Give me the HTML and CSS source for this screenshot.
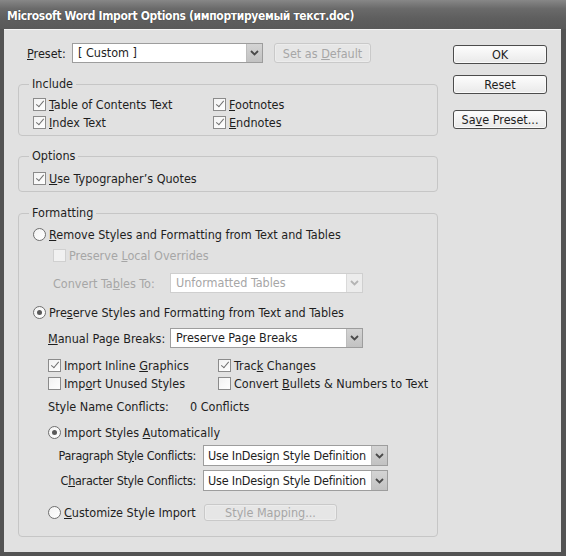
FILE: index.html
```html
<!DOCTYPE html>
<html lang="en">
<head>
    <meta charset="UTF-8">
    <title>Microsoft Word Import Options</title>
    <link rel="stylesheet" href="styles.css">
</head>
<body>

    <div class="window">
        <div class="titlebar">Microsoft Word Import Options (импортируемый текст.doc)</div>

        <div class="client">
            <div class="main">

                <!-- Preset picker -->
                <div class="preset-row">
                    <span class="preset-label"><u>P</u>reset:</span>
                    <div class="select preset-select">
                        <span class="select-value">[ Custom ]</span>
                        <span class="select-arrow"><svg width="9" height="6" viewBox="0 0 9 6"><polyline points="1,1 4.5,4.5 8,1" fill="none" stroke="#4a4a4a" stroke-width="1.8"/></svg></span>
                    </div>
                    <button class="btn btn-default" disabled>Set as <u>D</u>efault</button>
                </div>

                <!-- Include -->
                <fieldset class="group group-include">
                    <legend>Include</legend>
                    <div class="group-body">
                        <div class="cols cols-include">
                            <span class="opt"><span class="box checked"></span><span><u>T</u>able of Contents Text</span></span>
                            <span class="opt"><span class="box checked"></span><span><u>F</u>ootnotes</span></span>
                            <span class="opt"><span class="box checked"></span><span><u>I</u>ndex Text</span></span>
                            <span class="opt"><span class="box checked"></span><span><u>E</u>ndnotes</span></span>
                        </div>
                    </div>
                </fieldset>

                <!-- Options -->
                <fieldset class="group group-options">
                    <legend>Options</legend>
                    <div class="group-body">
                        <span class="opt"><span class="box checked"></span><span><u>U</u>se Typographer’s Quotes</span></span>
                    </div>
                </fieldset>

                <!-- Formatting -->
                <fieldset class="group group-formatting">
                    <legend>Formatting</legend>
                    <div class="group-body">
                        <div class="row"><span class="opt"><span class="radio"></span><span><u>R</u>emove Styles and Formatting from Text and Tables</span></span></div>

                        <div class="row row-local"><span class="opt off"><span class="box"></span><span>Preserve <u>L</u>ocal Overrides</span></span></div>

                        <div class="row row-field row-convert">
                            <span class="field-label off">Convert Ta<u>b</u>les To:</span>
                            <div class="select select-wide off">
                                <span class="select-value">Unformatted Tables</span>
                                <span class="select-arrow"><svg width="9" height="6" viewBox="0 0 9 6"><polyline points="1,1 4.5,4.5 8,1" fill="none" stroke="#b4b4b4" stroke-width="1.8"/></svg></span>
                            </div>
                        </div>

                        <div class="row row-preserve"><span class="opt"><span class="radio selected"></span><span>Pre<u>s</u>erve Styles and Formatting from Text and Tables</span></span></div>

                        <div class="row row-field row-manual">
                            <span class="field-label"><u>M</u>anual Page Breaks:</span>
                            <div class="select select-wide">
                                <span class="select-value">Preserve Page Breaks</span>
                                <span class="select-arrow"><svg width="9" height="6" viewBox="0 0 9 6"><polyline points="1,1 4.5,4.5 8,1" fill="none" stroke="#4a4a4a" stroke-width="1.8"/></svg></span>
                            </div>
                        </div>

                        <div class="cols cols-format">
                            <span class="opt"><span class="box checked"></span><span>Import Inline <u>G</u>raphics</span></span>
                            <span class="opt"><span class="box checked"></span><span>Trac<u>k</u> Changes</span></span>
                            <span class="opt"><span class="box"></span><span>Imp<u>o</u>rt Unused Styles</span></span>
                            <span class="opt"><span class="box"></span><span>Convert <u>B</u>ullets &amp; Numbers to Text</span></span>
                        </div>

                        <div class="row row-sub row-conflicts">
                            <span class="conflicts-label">Style Name Conflicts:</span>
                            <span>0 Conflicts</span>
                        </div>

                        <div class="row row-sub row-auto"><span class="opt"><span class="radio selected"></span><span>Import Styles <u>A</u>utomatically</span></span></div>

                        <div class="row row-sub row-style">
                            <span class="style-label">Paragraph St<u>y</u>le Conflicts:</span>
                            <div class="select select-style">
                                <span class="select-value">Use InDesign Style Definition</span>
                                <span class="select-arrow"><svg width="9" height="6" viewBox="0 0 9 6"><polyline points="1,1 4.5,4.5 8,1" fill="none" stroke="#4a4a4a" stroke-width="1.8"/></svg></span>
                            </div>
                        </div>

                        <div class="row row-sub row-style">
                            <span class="style-label">C<u>h</u>aracter Style Conflicts:</span>
                            <div class="select select-style">
                                <span class="select-value">Use InDesign Style Definition</span>
                                <span class="select-arrow"><svg width="9" height="6" viewBox="0 0 9 6"><polyline points="1,1 4.5,4.5 8,1" fill="none" stroke="#4a4a4a" stroke-width="1.8"/></svg></span>
                            </div>
                        </div>

                        <div class="row row-sub row-custom">
                            <span class="opt opt-custom"><span class="radio"></span><span><u>C</u>ustomize Style Import</span></span>
                            <button class="btn btn-mapping" disabled>Style Mappin<u>g</u>...</button>
                        </div>
                    </div>
                </fieldset>
            </div>

            <!-- Dialog buttons -->
            <div class="side">
                <button class="btn btn-ok">OK</button>
                <button class="btn btn-reset">Reset</button>
                <button class="btn btn-save">Sa<u>v</u>e Preset...</button>
            </div>
        </div>
    </div>

</body>
</html>
```

FILE: styles.css
```css
/* Reset and base styles */
* {
    margin: 0;
    padding: 0;
    box-sizing: border-box;
}

body {
    width: 566px;
    height: 556px;
    font-family: 'DejaVu Sans Condensed', 'Liberation Sans', sans-serif;
    font-size: 12.5px;
    color: #1e1e1e;
    background: #4f4f4f;
}

u {
    text-decoration: underline;
    text-underline-offset: 1px;
}

/* Window frame */
.window {
    width: 566px;
    height: 556px;
    display: flex;
    flex-direction: column;
    background: #535353;
}

.titlebar {
    height: 29px;
    padding: 4px 0 0 7px;
    line-height: 25px;
    font-weight: bold;
    font-size: 12px;
    letter-spacing: -0.35px;
    color: #fff;
    text-shadow: 0 0 1px rgba(0, 0, 0, 0.6);
    background: linear-gradient(180deg, #878787 0%, #6a6a6a 30%, #5e5e5e 65%, #595959 100%);
}

.client {
    flex: 1;
    display: flex;
    margin: 0 5px 4px 4px;
    padding: 13px 14px 0 14px;
    background: #e1e1e1;
    border-top: 1px solid #f4f4f4;
}

.main {
    width: 420px;
}

.side {
    width: 94px;
    margin-left: 15px;
    padding-top: 2px;
    display: flex;
    flex-direction: column;
}

/* Buttons */
.btn {
    height: 19px;
    font-family: inherit;
    font-size: 12.5px;
    color: #1e1e1e;
    background: linear-gradient(180deg, #fdfdfd, #e9e9e9);
    border: 1px solid #4c4c4c;
    border-radius: 3px;
    box-shadow: inset 0 0 0 1px #fafafa;
}

.btn:disabled {
    color: #a6a6a6;
    border-color: #c9c9c9;
    background: #e6e6e6;
    box-shadow: inset 0 0 0 1px #ececec;
}

.btn-reset {
    margin-top: 11px;
}

.btn-save {
    margin-top: 16px;
}

/* Dropdowns */
.select {
    display: flex;
    align-items: stretch;
    height: 20px;
    background: #fff;
    border: 1px solid #9d9d9d;
}

.select-value {
    flex: 1;
    padding-left: 5px;
    line-height: 18px;
    white-space: nowrap;
    overflow: hidden;
}

.select-arrow {
    flex: none;
    width: 16px;
    display: flex;
    align-items: center;
    justify-content: center;
    background: linear-gradient(180deg, #d4d4d4, #c2c2c2);
    border-left: 1px solid #bdbdbd;
}

.select.off {
    border-color: #cfcfcf;
    color: #a6a6a6;
}

.select.off .select-arrow {
    background: #ececec;
    border-left-color: #dadada;
}

/* Preset row */
.preset-row {
    display: flex;
    align-items: center;
    height: 20px;
    padding-left: 9px;
}

.preset-label {
    width: 45px;
}

.preset-select {
    width: 191px;
}

.btn-default {
    width: 97px;
    height: 20px;
    margin-left: 11px;
}

/* Group boxes */
.group {
    border: 1px solid #c6c6c6;
    border-radius: 4px;
    width: 420px;
}

.group legend {
    margin-left: 10px;
    padding: 0 3px;
    line-height: 16px;
}

.group-body {
    padding: 0 0 4px 14px;
}

.group-include {
    margin-top: 13px;
}

.group-include .group-body {
    padding-top: 3px;
}

.group-options {
    margin-top: 12px;
}

.group-options .group-body {
    padding-top: 5px;
}

.group-formatting {
    margin-top: 13px;
}

.group-formatting .group-body {
    padding-top: 4px;
    padding-bottom: 15px;
}

/* Checkbox and radio items */
.opt {
    display: flex;
    align-items: center;
    height: 18px;
    white-space: nowrap;
}

.opt.off {
    color: #a6a6a6;
}

.box,
.radio {
    position: relative;
    flex: none;
    width: 13px;
    height: 13px;
    margin-right: 3px;
    background: linear-gradient(135deg, #f2f2f2, #fff);
    border: 1px solid #8b8b8b;
}

.radio {
    border-radius: 50%;
    border-color: #6f6f6f;
}

.opt.off .box {
    border-color: #d0d0d0;
    background: #f1f1f1;
}

.box.checked::after {
    content: '';
    position: absolute;
    left: 3.5px;
    top: 0.5px;
    width: 3px;
    height: 7px;
    border-right: 1.6px solid #707070;
    border-bottom: 1.6px solid #707070;
    transform: rotate(40deg);
}

.radio.selected::after {
    content: '';
    position: absolute;
    left: 3px;
    top: 3px;
    width: 5px;
    height: 5px;
    border-radius: 50%;
    background: #5a5a5a;
}

.cols {
    display: grid;
}

.cols-include {
    grid-template-columns: 180px 1fr;
}

.cols-format {
    grid-template-columns: 170px 1fr;
    margin: 8px 0 0 15px;
}

/* Formatting rows */
.row {
    display: flex;
    align-items: center;
    height: 18px;
}

.row-local {
    margin: 3px 0 0 20px;
}

.row-field {
    height: 20px;
}

.row-convert {
    margin: 9px 0 0 20px;
}

.row-preserve {
    margin-top: 10px;
}

.row-manual {
    margin: 7px 0 0 15px;
}

.field-label {
    flex: none;
}

.row-convert .field-label {
    width: 117px;
}

.row-manual .field-label {
    width: 122px;
}

.field-label.off {
    color: #a6a6a6;
}

.select-wide {
    width: 193px;
}

.row-sub {
    margin-left: 15px;
}

.row-conflicts {
    margin-top: 5px;
}

.conflicts-label {
    width: 142px;
}

.row-auto {
    margin-top: 8px;
}

.row-style {
    height: 21px;
    margin-top: 4px;
}

.style-label {
    flex: none;
    width: 148px;
    text-align: right;
    margin-right: 7px;
    letter-spacing: -0.3px;
}

.select-style {
    width: 185px;
    height: 21px;
}

.select-style .select-value {
    padding-left: 4px;
    line-height: 19px;
    letter-spacing: -0.2px;
}

.row-custom {
    margin-top: 12px;
}

.opt-custom {
    width: 156px;
}

.btn-mapping {
    width: 133px;
    height: 17px;
}
```
